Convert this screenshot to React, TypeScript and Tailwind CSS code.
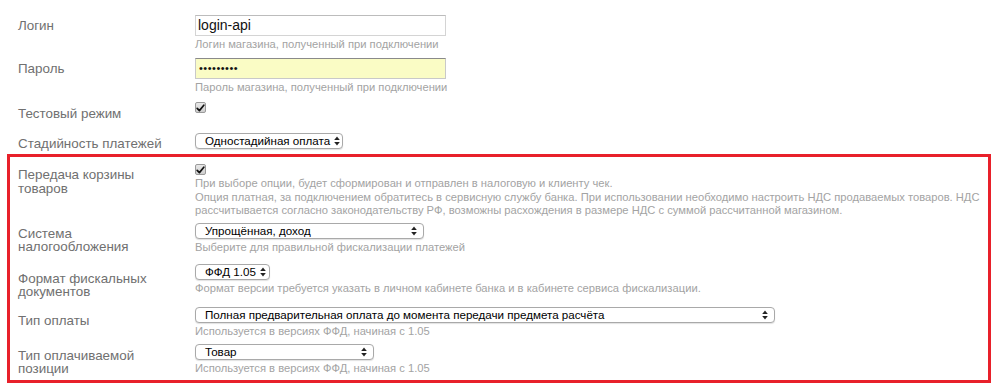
import type { ReactNode } from 'react'

const font = { fontFamily: '"Liberation Sans", Arial, Helvetica, sans-serif' }

function Arrows() {
  return (
    <svg width="6" height="10" viewBox="0 0 6 10" className="shrink-0">
      <path d="M3 0.5 L5.8 4 L0.2 4 Z" fill="#222" />
      <path d="M3 9.5 L5.8 6 L0.2 6 Z" fill="#222" />
    </svg>
  )
}

function Select({ value, width }: { value: string; width: string }) {
  return (
    <div
      className={`flex h-[16px] items-center justify-between gap-1 rounded-[4px] border border-[#a9a9a9] bg-white pl-[9px] pr-[6px] text-[11.6px] leading-none text-black shadow-[0_1px_1px_rgba(0,0,0,0.12)] ${width}`}
    >
      <span className="whitespace-nowrap">{value}</span>
      <Arrows />
    </div>
  )
}

function Checkbox() {
  return (
    <div className="flex h-[11px] w-[11px] items-center justify-center rounded-[2px] border border-[#9a9a9a] bg-gradient-to-b from-[#e8e8e8] to-[#cfcfcf]">
      <svg width="9" height="8" viewBox="0 0 9 8">
        <path d="M1.2 4.3 L3.4 6.6 L7.8 1.2" fill="none" stroke="#111" strokeWidth="1.7" strokeLinecap="round" strokeLinejoin="round" />
      </svg>
    </div>
  )
}

function Hint({ children, className = '' }: { children: ReactNode; className?: string }) {
  return <div className={`text-[11.2px] leading-[14px] text-[#a3a3a3] ${className}`}>{children}</div>
}

function Row({
  label,
  labelPt,
  className = '',
  children,
}: {
  label: ReactNode
  labelPt: string
  className?: string
  children: ReactNode
}) {
  return (
    <div className={`flex ${className}`}>
      <div className={`w-[177px] shrink-0 text-[13.4px] leading-[13.5px] text-[#707070] ${labelPt}`}>{label}</div>
      <div className="flex flex-col items-start">{children}</div>
    </div>
  )
}

export default function App() {
  return (
    <div className="h-[384px] w-[1000px] overflow-hidden bg-white" style={font}>
      <div className="pl-[18px] pt-[15px]">
        <Row label="Логин" labelPt="pt-[4px]">
          <div className="flex h-[21px] w-[251px] items-center border border-[#d4d4d4] border-t-[#bcbcbc] bg-white px-[2px] text-[14px] text-[#111]">
            login-api
          </div>
          <Hint className="mt-[1px]">Логин магазина, полученный при подключении</Hint>
        </Row>
        <Row label="Пароль" labelPt="pt-[4px]" className="mt-[7px]">
          <div className="flex h-[21px] w-[251px] items-center border border-[#c9c9c9] border-t-[#8a8a8a] bg-[#fafcc5] px-[3px] text-[11px] tracking-[0.5px] text-[#111]">
            •••••••••
          </div>
          <Hint className="mt-[1px]">Пароль магазина, полученный при подключении</Hint>
        </Row>
        <Row label="Тестовый режим" labelPt="pt-[5px]" className="mt-[8px]">
          <Checkbox />
        </Row>
        <Row label="Стадийность платежей" labelPt="pt-[4px]" className="mt-[12px]">
          <Select value="Одностадийная оплата" width="w-[148px]" />
        </Row>
      </div>

      <div className="ml-[7px] mt-[4px] h-[229px] w-[984px] border-[3px] border-[#e8202a] pl-[8px] pt-[7px]">
        <Row
          label={
            <>
              Передача корзины
              <br />
              товаров
            </>
          }
          labelPt="pt-[4px]"
        >
          <Checkbox />
          <div className="mt-[2px] max-w-[790px] text-[11.2px] leading-[13.5px] text-[#a3a3a3]">
            При выборе опции, будет сформирован и отправлен в налоговую и клиенту чек.
            <br />
            Опция платная, за подключением обратитесь в сервисную службу банка. При использовании необходимо настроить НДС
            продаваемых товаров. НДС рассчитывается согласно законодательству РФ, возможны расхождения в размере НДС с
            суммой рассчитанной магазином.
          </div>
        </Row>
        <Row
          label={
            <>
              Система
              <br />
              налогообложения
            </>
          }
          labelPt="pt-[4px]"
          className="mt-[5px]"
        >
          <Select value="Упрощённая, доход" width="w-[229px]" />
          <Hint className="mt-[1px]">Выберите для правильной фискализации платежей</Hint>
        </Row>
        <Row
          label={
            <>
              Формат фискальных
              <br />
              документов
            </>
          }
          labelPt="pt-[8px]"
          className="mt-[10px]"
        >
          <Select value="ФФД 1.05" width="w-[75px]" />
          <Hint className="mt-[1px]">Формат версии требуется указать в личном кабинете банка и в кабинете сервиса фискализации.</Hint>
        </Row>
        <Row label="Тип оплаты" labelPt="pt-[7px]" className="mt-[8px]">
          <Select value="Полная предварительная оплата до момента передачи предмета расчёта" width="w-[580px]" />
          <Hint className="mt-[1px]">Используется в версиях ФФД, начиная с 1.05</Hint>
        </Row>
        <Row
          label={
            <>
              Тип оплачиваемой
              <br />
              позиции
            </>
          }
          labelPt="pt-[5px]"
          className="mt-[6px]"
        >
          <Select value="Товар" width="w-[179px]" />
          <Hint className="mt-[1px]">Используется в версиях ФФД, начиная с 1.05</Hint>
        </Row>
      </div>
    </div>
  )
}
